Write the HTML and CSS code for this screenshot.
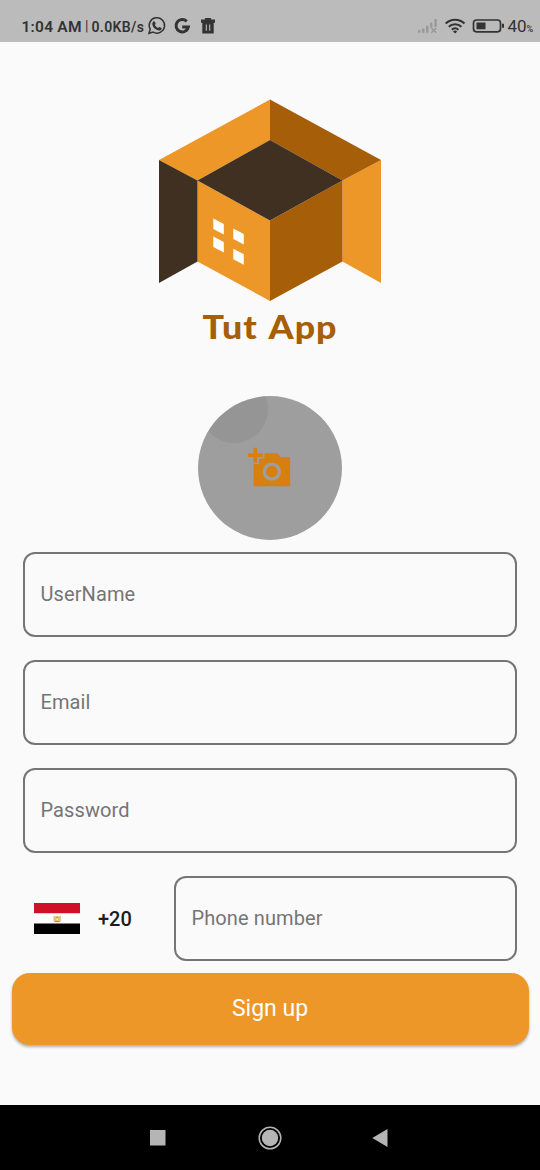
FILE: index.html
```
<!DOCTYPE html>
<html lang="en">
<head>
<meta charset="utf-8">
<title>Tut App</title>
<link rel="stylesheet" href="styles.css">
</head>
<body>
<header class="status">
  <svg class="status-left" width="220" height="42" viewBox="0 0 220 42">
    <text class="clock" x="21.5" y="32" textLength="60">1:04 AM</text>
    <text class="bar" x="85" y="31">|</text>
    <text class="speed" x="91.500" y="32" textLength="52.500">0.0KB/s</text>
    <g fill="none" stroke="#333">
      <path stroke-width="1.500" d="M149 33.300l1.200-4.100a7.700 7.700 0 1 1 2.900 2.900z"/>
    </g>
    <path fill="#333" d="M153.400 21.600c.5-.4 1.100-.3 1.400.2l.8 1.800c.2.500-.7 1.300-.6 1.700.7 1.200 1.600 2 2.900 2.600.5.100 1.100-1.100 1.600-.9l1.900 1c.5.300 0 1.500-.5 1.900-1.200.9-2.800.6-4.200-.1-2-1-3.500-2.600-4.200-4.600-.4-1.300-.1-2.800.9-3.600z"/>
    <path fill="none" stroke="#333" stroke-width="3" d="M186.700 21.400a6.200 6.200 0 1 0 1.600 5.700H182.200"/>
    <path fill="#333" d="M201 19.500h4V18h6v1.500h4v3.200h-1.300V33.500h-11.400V22.700H201z"/>
    <path stroke="#bbb" stroke-width="1.100" d="M206.300 24.500v6.300M209.700 24.500v6.300"/>
  </svg>
  <svg class="status-right" width="130" height="42" viewBox="410 0 130 42">
    <path fill="#999" d="M418 30h2.400v2.700H418zM422 28.500h2.400v4.200H422zM426 25.700h2.400v7H426zM430 22.500h2.400v5H430zM434.300 19h2.400v8h-2.400z"/>
    <path fill="none" stroke="#999" stroke-width="1.500" d="M431.300 28l5 4.700M436.300 28l-5 4.700"/>
    <g fill="none" stroke="#333" stroke-width="2.100">
      <path d="M445.700 23.600a13.500 13.500 0 0 1 18.800 0M448.800 26.800a9 9 0 0 1 12.600 0M451.800 29.700a4.900 4.900 0 0 1 6.600 0"/>
      <rect x="473.500" y="20" width="27" height="11.800" rx="3" stroke-width="1.700"/>
    </g>
    <path fill="#333" d="M453 31.500a3 3 0 0 1 4.200 0l-2.100 2.100zM476.500 22.500h9v6.700h-9zM502 23.800h2v4h-2z"/>
    <text class="level" x="507.500" y="32" textLength="19">40</text>
    <text class="percent" x="526.500" y="32" textLength="7">%</text>
  </svg>
</header>
<main class="page">
  <svg class="logo" width="222" height="250" viewBox="159 99 222 250">
    <path fill="#ed9728" d="M270 99.500V140L197.500 180.500 159 160zM197.500 180.500L270 220.500V301L197.500 261.500zM381 160V283l-38.500-21.500v-81z"/>
    <path fill="#a65e08" d="M270 99.500L381 160l-38.500 20.500L270 140zM342.500 180.500v81L270 301v-80.500z"/>
    <path fill="#403021" d="M270 140l72.500 40.500-72.500 40-72.500-40zM159 160l38.500 20.500v81L159 283z"/>
    <path fill="#fff" d="M213.300 218.500l10.500 5.500v10.500l-10.500-5.500zM233.300 228.500l10.500 5.500v10.500l-10.500-5.500zM213.300 236.500l10.500 5.500v10.500l-10.500-5.500zM233.300 248.800l10.500 5.500v10.500l-10.500-5.500z"/>
    <text class="brand" x="202.500" y="338.500" textLength="135" lengthAdjust="spacingAndGlyphs">Tut App</text>
  </svg>
  <div class="avatar">
    <svg width="44" height="44" viewBox="0 0 24 24"><path fill="#d8800f" fill-rule="evenodd" d="M3 4V1h2v3h3v2H5v3H3V6H0V4zm3 6V7h3V4h7l1.830 2H23v16H3V10zm7 9a5 5 0 1 0 0-10 5 5 0 0 0 0 10zm0-1.800a3.200 3.200 0 1 0 0-6.400 3.200 3.200 0 0 0 0 6.400z"/></svg>
  </div>
  <form class="form">
    <div class="field">UserName</div>
    <div class="field">Email</div>
    <div class="field">Password</div>
    <div class="phone-row">
      <svg class="flag" width="46" height="31" viewBox="0 0 46 31">
        <path fill="#fff" d="M0 0h46v31H0z"/><path fill="#ce1126" d="M0 0h46v10.300H0z"/><path d="M0 20.500h46V31H0z"/>
        <path fill="#e3c275" d="M19.500 12.500l2.500 1 1-1 1 1 2.800-1v5.500l-1 1.300h-5l-1.300-1.300z"/><path fill="#c09300" d="M21 18h4.500v1H21zM22.500 14h1.500v1h-1.500z"/><path fill="#f6ecd0" d="M22.500 15.500h1.500v1.500h-1.500z"/>
      </svg>
      <span class="code">+20</span>
      <div class="field phone">Phone number</div>
    </div>
  </form>
  <div class="signup">Sign up</div>
</main>
<footer class="nav">
  <svg width="540" height="65" viewBox="0 0 540 65">
    <path fill="#b5b5b5" d="M150 25h15.500v15.500H150zM387.500 24v18L372.300 33z"/>
    <circle cx="270" cy="33" r="8.200" fill="#b5b5b5"/>
    <circle cx="270" cy="33" r="10.800" fill="none" stroke="#b5b5b5" stroke-width="1.500"/>
  </svg>
</footer>
</body>
</html>
```
FILE: styles.css
```
* { box-sizing: border-box; }
body {
  margin: 0;
  width: 540px;
  height: 1170px;
  display: flex;
  flex-direction: column;
  overflow: hidden;
  background: #fafafa;
  font-family: Roboto, sans-serif;
}
svg { display: block; flex: none; }
.status {
  height: 42px;
  display: flex;
  justify-content: space-between;
  background: #bbb;
}
.status text { fill: #333; }
.clock { font-size: 15.5px; font-weight: 600; }
.bar { font-size: 14px; }
.speed { font-size: 14px; font-weight: 600; }
.level { font-size: 17px; }
.percent { font-size: 9px; font-weight: 500; }
.page {
  flex: 1;
  display: flex;
  flex-direction: column;
  align-items: center;
  padding-top: 57px;
}
.brand {
  font-family: Lato, sans-serif;
  font-size: 33px;
  font-weight: 900;
  letter-spacing: 0.9px;
  word-spacing: 2.5px;
  fill: #a65e08;
}
.avatar {
  width: 144px;
  height: 144px;
  margin-top: 47px;
  border-radius: 50%;
  display: flex;
  align-items: center;
  justify-content: center;
  background: radial-gradient(circle at 36px 13px, #959595 33.500px, #9e9e9e 34.500px);
}
.form {
  width: 494px;
  margin-top: 12px;
  display: flex;
  flex-direction: column;
  gap: 23px;
}
.field {
  height: 85px;
  padding: 0 0 2px 15.500px;
  border: 2px solid #757575;
  border-radius: 12px;
  display: flex;
  align-items: center;
  color: #757575;
  font-size: 20px;
  letter-spacing: 0.1px;
}
.phone-row {
  display: flex;
  align-items: center;
  padding-left: 11.4px;
}
.flag { margin-right: 17.6px; }
.code {
  width: 76px;
  font-size: 20px;
  font-weight: 500;
  color: #1c1c1c;
}
.phone { flex: 1; }
.signup {
  width: 517px;
  height: 72px;
  margin: 11.500px 0 0;
  border-radius: 18px;
  display: flex;
  align-items: center;
  justify-content: center;
  background: #ed9728;
  color: #fff;
  font-size: 23px;
  box-shadow: 0 2px 3px rgba(0, 0, 0, .3);
}
.nav { height: 65px; background: #000; }
```
